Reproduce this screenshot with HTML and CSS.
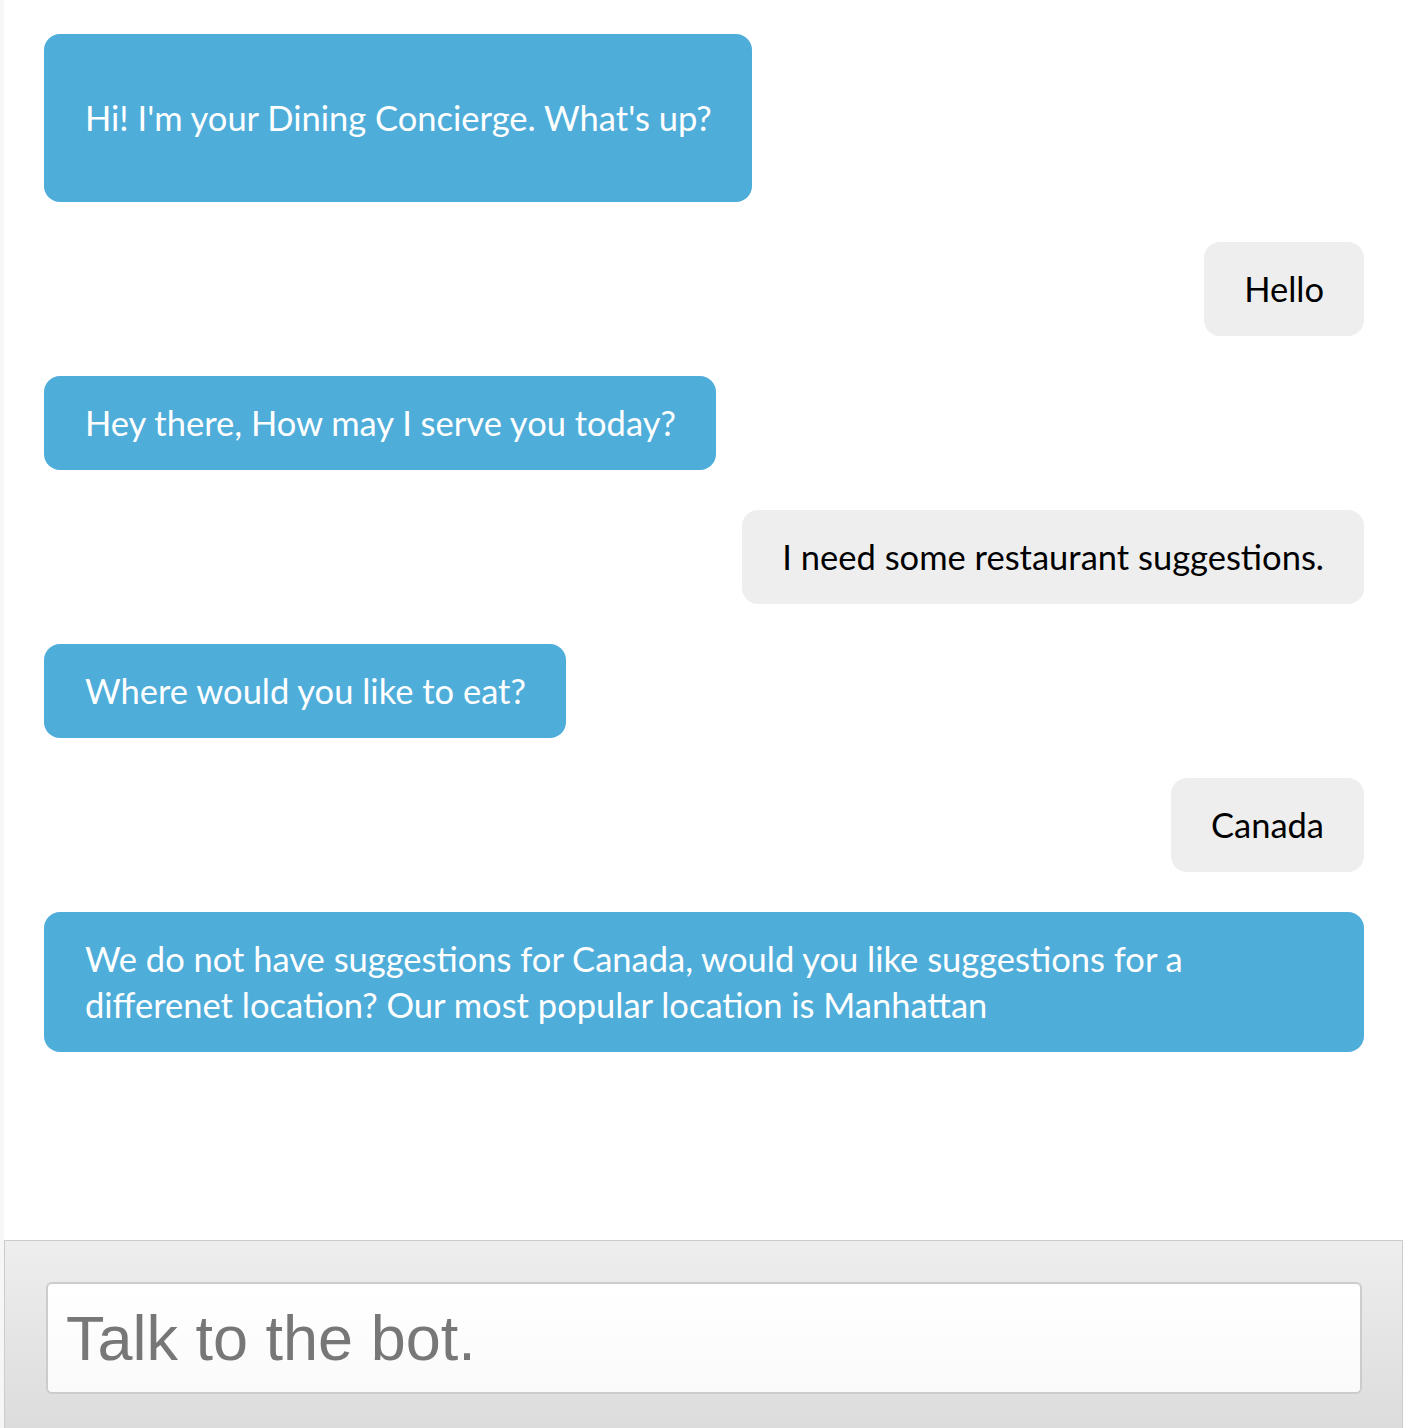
FILE: index.html
```html
<!DOCTYPE html>
<html>
<head>
<meta charset="utf-8">
<link rel="stylesheet" href="styles.css">
</head>
<body>
<div class="chat">
  <div class="messages">
    <div class="msg bot first">Hi! I'm your Dining Concierge. What's up?</div>
    <div class="msg user">Hello</div>
    <div class="msg bot">Hey there, How may I serve you today?</div>
    <div class="msg user">I need some restaurant suggestions.</div>
    <div class="msg bot">Where would you like to eat?</div>
    <div class="msg user">Canada</div>
    <div class="msg bot">We do not have suggestions for Canada, would you like suggestions for a differenet location? Our most popular location is Manhattan</div>
  </div>
  <div class="composer">
    <input class="input" type="text" placeholder="Talk to the bot.">
  </div>
</div>
</body>
</html>
```
FILE: styles.css
```css
html, body {
  margin: 0;
  padding: 0;
  height: 100%;
  background: #f6f6f6;
}
.chat {
  margin-left: 4px;
  height: 1428px;
  background: #fff;
  display: flex;
  flex-direction: column;
  overflow: hidden;
}
.messages {
  height: 1240px;
  box-sizing: border-box;
  padding: 34px 40px 0 40px;
  display: flex;
  flex-direction: column;
  align-items: flex-start;
  gap: 40px;
  font-family: "Lato", "Open Sans", sans-serif;
  font-size: 34.5px;
  line-height: 46px;
}
.msg {
  padding: 24px 40px 24px 41px;
  border-radius: 16px;
  box-sizing: border-box;
  max-width: 100%;
}
.msg.first {
  padding-top: 61px;
  padding-bottom: 61px;
}
.bot {
  background: #4fadda;
  color: #fff;
}
.user {
  align-self: flex-end;
  background: #eeeeee;
  color: #000;
  padding-left: 40px;
}
.composer {
  flex: 1;
  border-top: 1px solid #cccccc;
  border-left: 1px solid #cccccc;
  border-right: 1px solid #cccccc;
  margin-right: 1px;
  background: linear-gradient(#eeeeee, #dcdcdc);
  padding: 41px 40px 0 41px;
}
.input {
  display: block;
  box-sizing: border-box;
  width: 1316px;
  height: 112px;
  margin: 0;
  border: 2px solid #cccccc;
  border-radius: 6px;
  background: linear-gradient(#ffffff, #fafafa);
  padding: 0 18px;
  font-family: "Liberation Sans", Arial, sans-serif;
  font-size: 63px;
  color: #333;
  outline: none;
}
.input::placeholder {
  color: #777777;
}
```
